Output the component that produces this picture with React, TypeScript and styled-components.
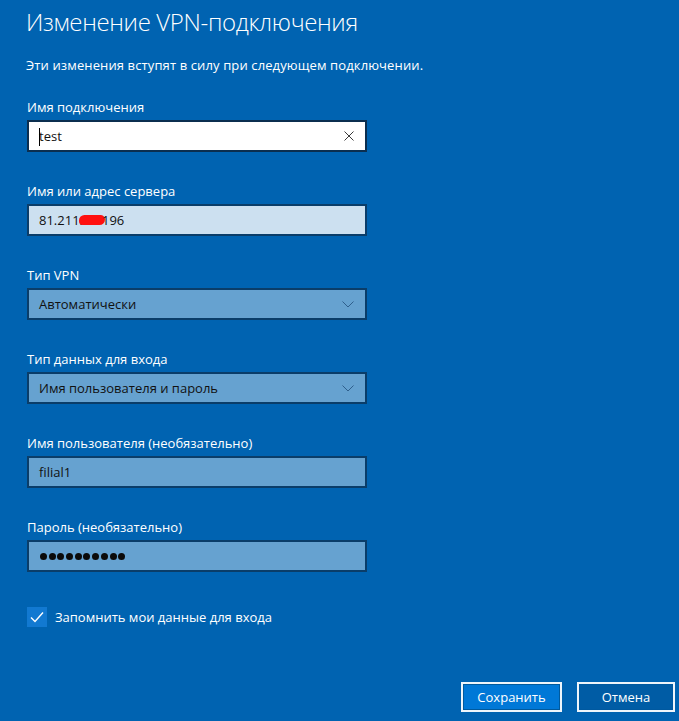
import React from "react";
import styled, { createGlobalStyle } from "styled-components";

const GlobalStyle = createGlobalStyle`
  html, body {
    margin: 0;
    padding: 0;
    background: #0063b1;
  }
  body {
    font-family: "Open Sans", "Noto Sans", "Liberation Sans", sans-serif;
  }
`;

const Page = styled.div`
  box-sizing: border-box;
  width: 679px;
  height: 721px;
  padding: 6px 4px 9px 27px;
  display: flex;
  flex-direction: column;
  color: #ffffff;
  overflow: hidden;
`;

const Title = styled.h1`
  margin: 0 0 0 -1px;
  font-size: 24px;
  line-height: 32px;
  font-weight: 300;
  letter-spacing: -0.35px;
`;

const Subtitle = styled.p`
  margin: 17px 0 22px -1px;
  font-size: 13px;
  line-height: 20px;
  letter-spacing: 0.12px;
`;

const Form = styled.div`
  display: flex;
  flex-direction: column;
  gap: 29px;
`;

const Field = styled.div`
  display: flex;
  flex-direction: column;
  gap: 3px;
`;

const Label = styled.label`
  font-size: 13px;
  line-height: 20px;
`;

type BoxKind = "focused" | "light" | "muted";

const Box = styled.div<{ $kind: BoxKind }>`
  box-sizing: border-box;
  width: 340px;
  height: 32px;
  display: flex;
  align-items: center;
  padding: 0 10px 0 10px;
  border: 2px solid ${({ $kind }) => ($kind === "focused" ? "#0b2e4f" : "#0a3d69")};
  background: ${({ $kind }) =>
    $kind === "focused" ? "#ffffff" : $kind === "light" ? "#cce0f0" : "#66a2d0"};
  color: #111111;
  font-size: 13px;
  position: relative;
`;

const Value = styled.span`
  flex: 1;
  white-space: nowrap;
  display: flex;
  align-items: center;
`;

const Caret = styled.span`
  position: absolute;
  left: 10px;
  top: 6px;
  width: 1px;
  height: 18px;
  background: #000000;
`;

const Redaction = styled.span`
  display: inline-block;
  width: 26px;
  height: 10px;
  margin: 0 -3px 0 -4px;
  border-radius: 6px 5px 6px 4px;
  background: #ff1010;
`;

const Dots = styled.span`
  display: flex;
  gap: 1.7px;
  margin-left: 1px;
`;

const Dot = styled.span`
  width: 7px;
  height: 7px;
  border-radius: 50%;
  background: #0b0b0b;
`;

const Icon = styled.svg`
  flex: none;
  margin-right: 1px;
`;

const CheckRow = styled.div`
  margin-top: 35px;
  display: flex;
  align-items: center;
  gap: 8px;
  font-size: 13px;
`;

const CheckBox = styled.span`
  width: 20px;
  height: 20px;
  background: #1279d1;
  display: flex;
  align-items: center;
  justify-content: center;
`;

const Footer = styled.div`
  margin-top: auto;
  display: flex;
  justify-content: flex-end;
  gap: 15px;
`;

const Button = styled.button<{ $primary?: boolean; $width: number }>`
  box-sizing: border-box;
  width: ${({ $width }) => $width}px;
  height: 30px;
  border: 2px solid #eef5fb;
  box-shadow: inset 0 0 0 1px ${({ $primary }) => ($primary ? "#005a9e" : "#0059a0")};
  background: ${({ $primary }) => ($primary ? "#0078d7" : "#005ca5")};
  color: #ffffff;
  font-family: inherit;
  font-size: 13px;
  padding: 0;
`;

const ClearIcon = () => (
  <Icon width="10" height="10" viewBox="0 0 10 10">
    <path d="M0.5 0.5 L9.5 9.5 M9.5 0.5 L0.5 9.5" stroke="#3a3a3a" strokeWidth="1" fill="none" />
  </Icon>
);

const Chevron = () => (
  <Icon width="12" height="7" viewBox="0 0 12 7">
    <path d="M0.5 0.5 L6 6 L11.5 0.5" stroke="#2f5f8c" strokeWidth="1" fill="none" />
  </Icon>
);

export default function App() {
  return (
    <Page>
      <GlobalStyle />
      <Title>Изменение VPN-подключения</Title>
      <Subtitle>Эти изменения вступят в силу при следующем подключении.</Subtitle>
      <Form>
        <Field>
          <Label>Имя подключения</Label>
          <Box $kind="focused">
            <Caret />
            <Value>test</Value>
            <ClearIcon />
          </Box>
        </Field>
        <Field>
          <Label>Имя или адрес сервера</Label>
          <Box $kind="light">
            <Value>
              81.211.<Redaction />196
            </Value>
          </Box>
        </Field>
        <Field>
          <Label>Тип VPN</Label>
          <Box $kind="muted">
            <Value>Автоматически</Value>
            <Chevron />
          </Box>
        </Field>
        <Field>
          <Label>Тип данных для входа</Label>
          <Box $kind="muted">
            <Value>Имя пользователя и пароль</Value>
            <Chevron />
          </Box>
        </Field>
        <Field>
          <Label>Имя пользователя (необязательно)</Label>
          <Box $kind="muted">
            <Value>filial1</Value>
          </Box>
        </Field>
        <Field>
          <Label>Пароль (необязательно)</Label>
          <Box $kind="muted">
            <Dots>
              {Array.from({ length: 10 }).map((_, i) => (
                <Dot key={i} />
              ))}
            </Dots>
          </Box>
        </Field>
      </Form>
      <CheckRow>
        <CheckBox>
          <svg width="14" height="12" viewBox="0 0 14 12">
            <path d="M1 6.5 L5 10.5 L13 1.5" stroke="#ffffff" strokeWidth="1.4" fill="none" />
          </svg>
        </CheckBox>
        Запомнить мои данные для входа
      </CheckRow>
      <Footer>
        <Button $primary $width={101}>Сохранить</Button>
        <Button $width={98}>Отмена</Button>
      </Footer>
    </Page>
  );
}
